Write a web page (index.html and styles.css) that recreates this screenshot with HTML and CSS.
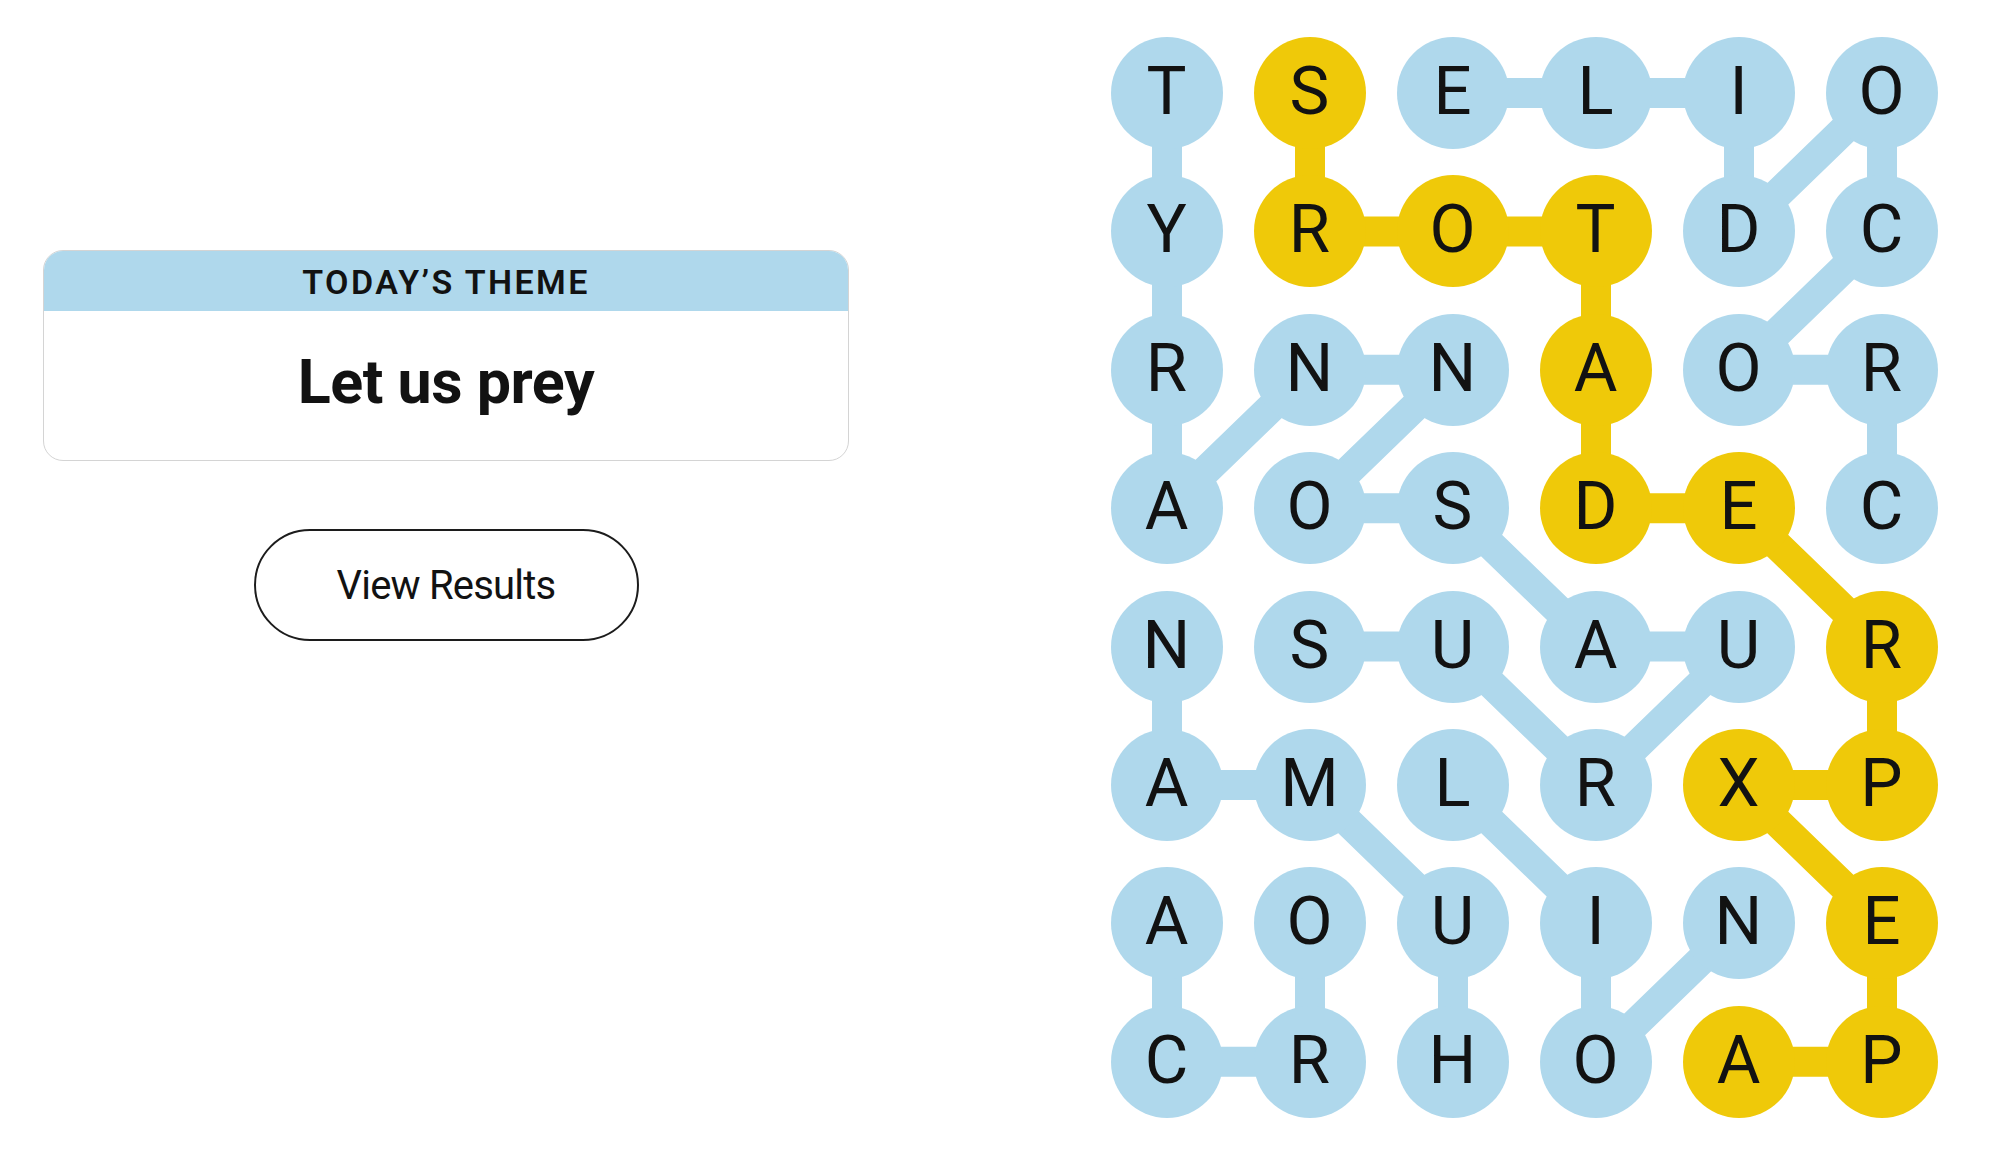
FILE: index.html
```html
<!DOCTYPE html>
<html lang="en">
<head>
<meta charset="utf-8">
<title>Strands</title>
<link rel="stylesheet" href="styles.css">
</head>
<body>
<main class="page">
  <section class="side">
    <div class="theme-card">
      <div class="theme-head">TODAY’S THEME</div>
      <div class="theme-body">Let us prey</div>
    </div>
    <button class="results-btn" type="button">View Results</button>
  </section>

  <section class="board">
    <!-- word paths, drawn beneath the letter tiles -->
    <svg class="paths" width="827" height="1081" viewBox="0 0 827 1081" aria-hidden="true">
      <g class="path-found">
        <!-- TYRANNOSAURUS -->
        <polyline points="56,56 56,194.4 56,332.8 56,471.2 199,332.8 342,332.8 199,471.2 342,471.2 485,609.6 628,609.6 485,748 342,609.6 199,609.6"/>
        <!-- CROCODILE -->
        <polyline points="771,471.2 771,332.8 628,332.8 771,194.4 771,56 628,194.4 628,56 485,56 342,56"/>
        <!-- ORCA -->
        <polyline points="199,886.4 199,1024.8 56,1024.8 56,886.4"/>
        <!-- LION -->
        <polyline points="342,748 485,886.4 485,1024.8 628,886.4"/>
        <!-- HUMAN -->
        <polyline points="342,1024.8 342,886.4 199,748 56,748 56,609.6"/>
      </g>
      <g class="path-span">
        <!-- APEXPREDATORS -->
        <polyline points="628,1024.8 771,1024.8 771,886.4 628,748 771,748 771,609.6 628,471.2 485,471.2 485,332.8 485,194.4 342,194.4 199,194.4 199,56"/>
      </g>
    </svg>

    <div class="grid">
      <div class="tile found">T</div><div class="tile span">S</div><div class="tile found">E</div><div class="tile found">L</div><div class="tile found">I</div><div class="tile found">O</div>
      <div class="tile found">Y</div><div class="tile span">R</div><div class="tile span">O</div><div class="tile span">T</div><div class="tile found">D</div><div class="tile found">C</div>
      <div class="tile found">R</div><div class="tile found">N</div><div class="tile found">N</div><div class="tile span">A</div><div class="tile found">O</div><div class="tile found">R</div>
      <div class="tile found">A</div><div class="tile found">O</div><div class="tile found">S</div><div class="tile span">D</div><div class="tile span">E</div><div class="tile found">C</div>
      <div class="tile found">N</div><div class="tile found">S</div><div class="tile found">U</div><div class="tile found">A</div><div class="tile found">U</div><div class="tile span">R</div>
      <div class="tile found">A</div><div class="tile found">M</div><div class="tile found">L</div><div class="tile found">R</div><div class="tile span">X</div><div class="tile span">P</div>
      <div class="tile found">A</div><div class="tile found">O</div><div class="tile found">U</div><div class="tile found">I</div><div class="tile found">N</div><div class="tile span">E</div>
      <div class="tile found">C</div><div class="tile found">R</div><div class="tile found">H</div><div class="tile found">O</div><div class="tile span">A</div><div class="tile span">P</div>
    </div>
  </section>
</main>
</body>
</html>
```

FILE: styles.css
```css
html, body {
  margin: 0;
  padding: 0;
  background: #ffffff;
}

body {
  font-family: Roboto, "Liberation Sans", Arial, sans-serif;
  color: #121212;
}

.page {
  display: flex;
  align-items: flex-start;
  width: 2000px;
  height: 1159px;
  box-sizing: border-box;
}

/* left column: theme card + results button */
.side {
  display: flex;
  flex-direction: column;
  align-items: center;
  width: 806px;
  margin-left: 43px;
  padding-top: 250px;
}

.theme-card {
  width: 806px;
  box-sizing: border-box;
  border: 1px solid #d4d4d4;
  border-radius: 20px;
  overflow: hidden;
  background: #ffffff;
}

.theme-head {
  height: 61px;
  display: flex;
  align-items: center;
  justify-content: center;
  padding-top: 2px;
  box-sizing: border-box;
  background: #afd8ec;
  font-size: 34px;
  font-weight: 600;
  letter-spacing: 2.4px;
  margin: -1px -1px 0;
}

.theme-body {
  height: 149px;
  display: flex;
  align-items: center;
  justify-content: center;
  padding-bottom: 8px;
  box-sizing: border-box;
  font-size: 61px;
  font-weight: 700;
  letter-spacing: -0.5px;
}

.results-btn {
  margin-top: 68px;
  width: 385px;
  height: 112px;
  border: 2.5px solid #1c1c1c;
  border-radius: 56px;
  background: #ffffff;
  color: #121212;
  font-family: inherit;
  font-size: 40px;
  font-weight: 400;
  letter-spacing: -0.8px;
  padding: 0;
  cursor: pointer;
}

/* letter board */
.board {
  position: relative;
  margin-left: 261.5px;
  margin-top: 37px;
  width: 827px;
  height: 1081px;
}

.paths {
  position: absolute;
  left: 0;
  top: 0;
  z-index: 0;
}

.paths polyline {
  fill: none;
  stroke-width: 30;
  stroke-linejoin: miter;
  stroke-linecap: butt;
}

.path-found polyline {
  stroke: #afd8ec;
}

.path-span polyline {
  stroke: #efc909;
}

.grid {
  position: relative;
  z-index: 1;
  display: grid;
  grid-template-columns: repeat(6, 112px);
  grid-auto-rows: 112px;
  column-gap: 31px;
  row-gap: 26.4px;
}

.tile {
  width: 112px;
  height: 112px;
  border-radius: 50%;
  display: flex;
  align-items: center;
  justify-content: center;
  font-size: 67px;
  font-weight: 400;
  line-height: 1;
  color: #121212;
  padding-bottom: 3px;
  box-sizing: border-box;
}

.tile.found {
  background: #afd8ec;
}

.tile.span {
  background: #efc909;
}
```
